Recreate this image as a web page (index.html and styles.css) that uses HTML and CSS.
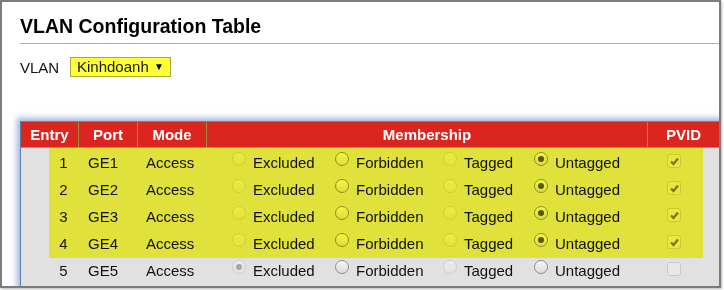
FILE: index.html
```html
<html>
<head>
<meta http-equiv="Content-Type" content="text/html; charset=utf-8">
<link rel="stylesheet" href="styles.css">
</head>
<body>
<div class="frame">
  <h1 class="title">VLAN Configuration Table</h1>
  <div class="rule"></div>
  <div class="vlanRow">
    <span class="vlanLbl">VLAN</span>
    <span class="vlanSel">Kinhdoanh <span class="arrow">&#9660;</span></span>
  </div>

  <div class="panel">
    <div class="thead">
      <div class="th">Entry</div>
      <div class="th">Port</div>
      <div class="th">Mode</div>
      <div class="th">Membership</div>
      <div class="th last">PVID</div>
    </div>
    <div class="tbody">
      <!-- 1..4 : untagged members -->
      <div class="row">
        <span></span><span class="num">1</span><span class="port">GE1</span><span class="mode">Access</span>
        <span class="opts">
          <span class="opt"><i class="radio off"></i>Excluded</span>
          <span class="opt"><i class="radio"></i>Forbidden</span>
          <span class="opt"><i class="radio off"></i>Tagged</span>
          <span class="opt"><i class="radio sel"></i>Untagged</span>
        </span>
        <span class="pvid"><i class="chk"><svg width="11" height="11" viewBox="0 0 11 11"><path d="M2 5.5 L4.5 8 L9 2.5" fill="none" stroke="#7a7a7a" stroke-width="2.4"/></svg></i></span>
      </div>
      <div class="row">
        <span></span><span class="num">2</span><span class="port">GE2</span><span class="mode">Access</span>
        <span class="opts">
          <span class="opt"><i class="radio off"></i>Excluded</span>
          <span class="opt"><i class="radio"></i>Forbidden</span>
          <span class="opt"><i class="radio off"></i>Tagged</span>
          <span class="opt"><i class="radio sel"></i>Untagged</span>
        </span>
        <span class="pvid"><i class="chk"><svg width="11" height="11" viewBox="0 0 11 11"><path d="M2 5.5 L4.5 8 L9 2.5" fill="none" stroke="#7a7a7a" stroke-width="2.4"/></svg></i></span>
      </div>
      <div class="row">
        <span></span><span class="num">3</span><span class="port">GE3</span><span class="mode">Access</span>
        <span class="opts">
          <span class="opt"><i class="radio off"></i>Excluded</span>
          <span class="opt"><i class="radio"></i>Forbidden</span>
          <span class="opt"><i class="radio off"></i>Tagged</span>
          <span class="opt"><i class="radio sel"></i>Untagged</span>
        </span>
        <span class="pvid"><i class="chk"><svg width="11" height="11" viewBox="0 0 11 11"><path d="M2 5.5 L4.5 8 L9 2.5" fill="none" stroke="#7a7a7a" stroke-width="2.4"/></svg></i></span>
      </div>
      <div class="row">
        <span></span><span class="num">4</span><span class="port">GE4</span><span class="mode">Access</span>
        <span class="opts">
          <span class="opt"><i class="radio off"></i>Excluded</span>
          <span class="opt"><i class="radio"></i>Forbidden</span>
          <span class="opt"><i class="radio off"></i>Tagged</span>
          <span class="opt"><i class="radio sel"></i>Untagged</span>
        </span>
        <span class="pvid"><i class="chk"><svg width="11" height="11" viewBox="0 0 11 11"><path d="M2 5.5 L4.5 8 L9 2.5" fill="none" stroke="#7a7a7a" stroke-width="2.4"/></svg></i></span>
      </div>
      <!-- not a member -->
      <div class="row">
        <span></span><span class="num">5</span><span class="port">GE5</span><span class="mode">Access</span>
        <span class="opts">
          <span class="opt"><i class="radio off dis"></i>Excluded</span>
          <span class="opt"><i class="radio"></i>Forbidden</span>
          <span class="opt"><i class="radio off"></i>Tagged</span>
          <span class="opt"><i class="radio"></i>Untagged</span>
        </span>
        <span class="pvid"><i class="chk"></i></span>
      </div>
      <!-- highlighter mark over rows 1-4 -->
      <div class="marker"></div>
    </div>
  </div>
</div>
</body>
</html>
```

FILE: styles.css
```css
body{
    margin: 0;
    background: #ffffff;
    font-family: "Liberation Sans", Arial, sans-serif;
    color: #111111;
}
/* screenshot frame */
.frame{
    width: 717px;
    height: 284px;
    border: 2px solid #7c7c7c;
    overflow: hidden;
    background: #ffffff;
    box-shadow: 1px 1px 2px #b8b8b8;
}
.title{
    margin: 0;
    padding: 13px 0 0 18px;
    font-size: 19.5px;
    line-height: 23px;
    font-weight: bold;
    color: #000000;
}
.rule{
    height: 1px;
    margin: 5px 0 0 18px;
    background: #a7acbe;
}
.vlanRow{
    display: flex;
    align-items: center;
    margin: 13px 0 0 18px;
    font-size: 15px;
}
.vlanLbl{
    width: 50px;
}
.vlanSel{
    height: 18px;
    line-height: 18px;
    padding: 0 6px 0 6px;
    border: 1px solid #a9a83c;
    background: #ffff38;
    color: #1a1a1a;
}
.arrow{
    font-size: 10px;
    vertical-align: 2px;
    margin-left: 1px;
    color: #000000;
}
/* table panel */
.panel{
    margin: 44px -10px 0 18px;
    background: #e1e1e1;
    border-left: 1px solid #5f7fae;
    box-shadow: -3px -3px 6px rgba(80, 120, 190, 0.55);
    padding-bottom: 20px;
}
.thead{
    display: grid;
    grid-template-columns: 58px 59px 69px 441px 1fr;
    background: #da261e;
    border-top: 1px solid #8a8456;
    border-bottom: 1px solid #a29a50;
}
.th{
    height: 25px;
    line-height: 25px;
    text-align: center;
    color: #ffffff;
    font-size: 15px;
    font-weight: bold;
    border-right: 1px solid #9c8d40;
}
.th.last{
    border-right: none;
    padding-right: 10px;
}
.tbody{
    position: relative;
    padding-top: 1px;
}
.row{
    display: grid;
    grid-template-columns: 28px 29px 59px 69px 441px 1fr;
    height: 27px;
    line-height: 27px;
    font-size: 15px;
}
.num{
    text-align: center;
}
.port{
    padding-left: 10px;
}
.mode{
    padding-left: 9px;
}
.opts{
    display: grid;
    grid-template-columns: 103px 108px 91px auto;
    padding-left: 26px;
}
.opt{
    display: flex;
    align-items: flex-start;
}
.radio{
    box-sizing: border-box;
    width: 14px;
    height: 14px;
    margin: 3px 7px 0 0;
    border: 1px solid #8e8e8e;
    border-radius: 50%;
    background: linear-gradient(#f6f6f6, #dcdcdc);
    position: relative;
}
.radio.off{
    border-color: #cfcfcf;
    background: linear-gradient(#ececec, #e2e2e2);
}
.radio.sel:after, .radio.dis:after{
    content: "";
    position: absolute;
    left: 3px;
    top: 3px;
    width: 6px;
    height: 6px;
    border-radius: 50%;
    background: #555555;
}
.radio.dis:after{
    background: #a6a6a6;
}
.pvid{
    padding-left: 20px;
}
.chk{
    box-sizing: border-box;
    display: block;
    width: 14px;
    height: 14px;
    margin-top: 5px;
    border: 1px solid #c9c9c9;
    border-radius: 3px;
    background: #e8e8e8;
}
.chk svg{
    display: block;
    margin: 1px 0 0 1px;
}
/* yellow highlighter */
.marker{
    position: absolute;
    left: 28px;
    top: 0;
    width: 654px;
    height: 110px;
    background: #ffff44;
    mix-blend-mode: multiply;
    pointer-events: none;
}
```
